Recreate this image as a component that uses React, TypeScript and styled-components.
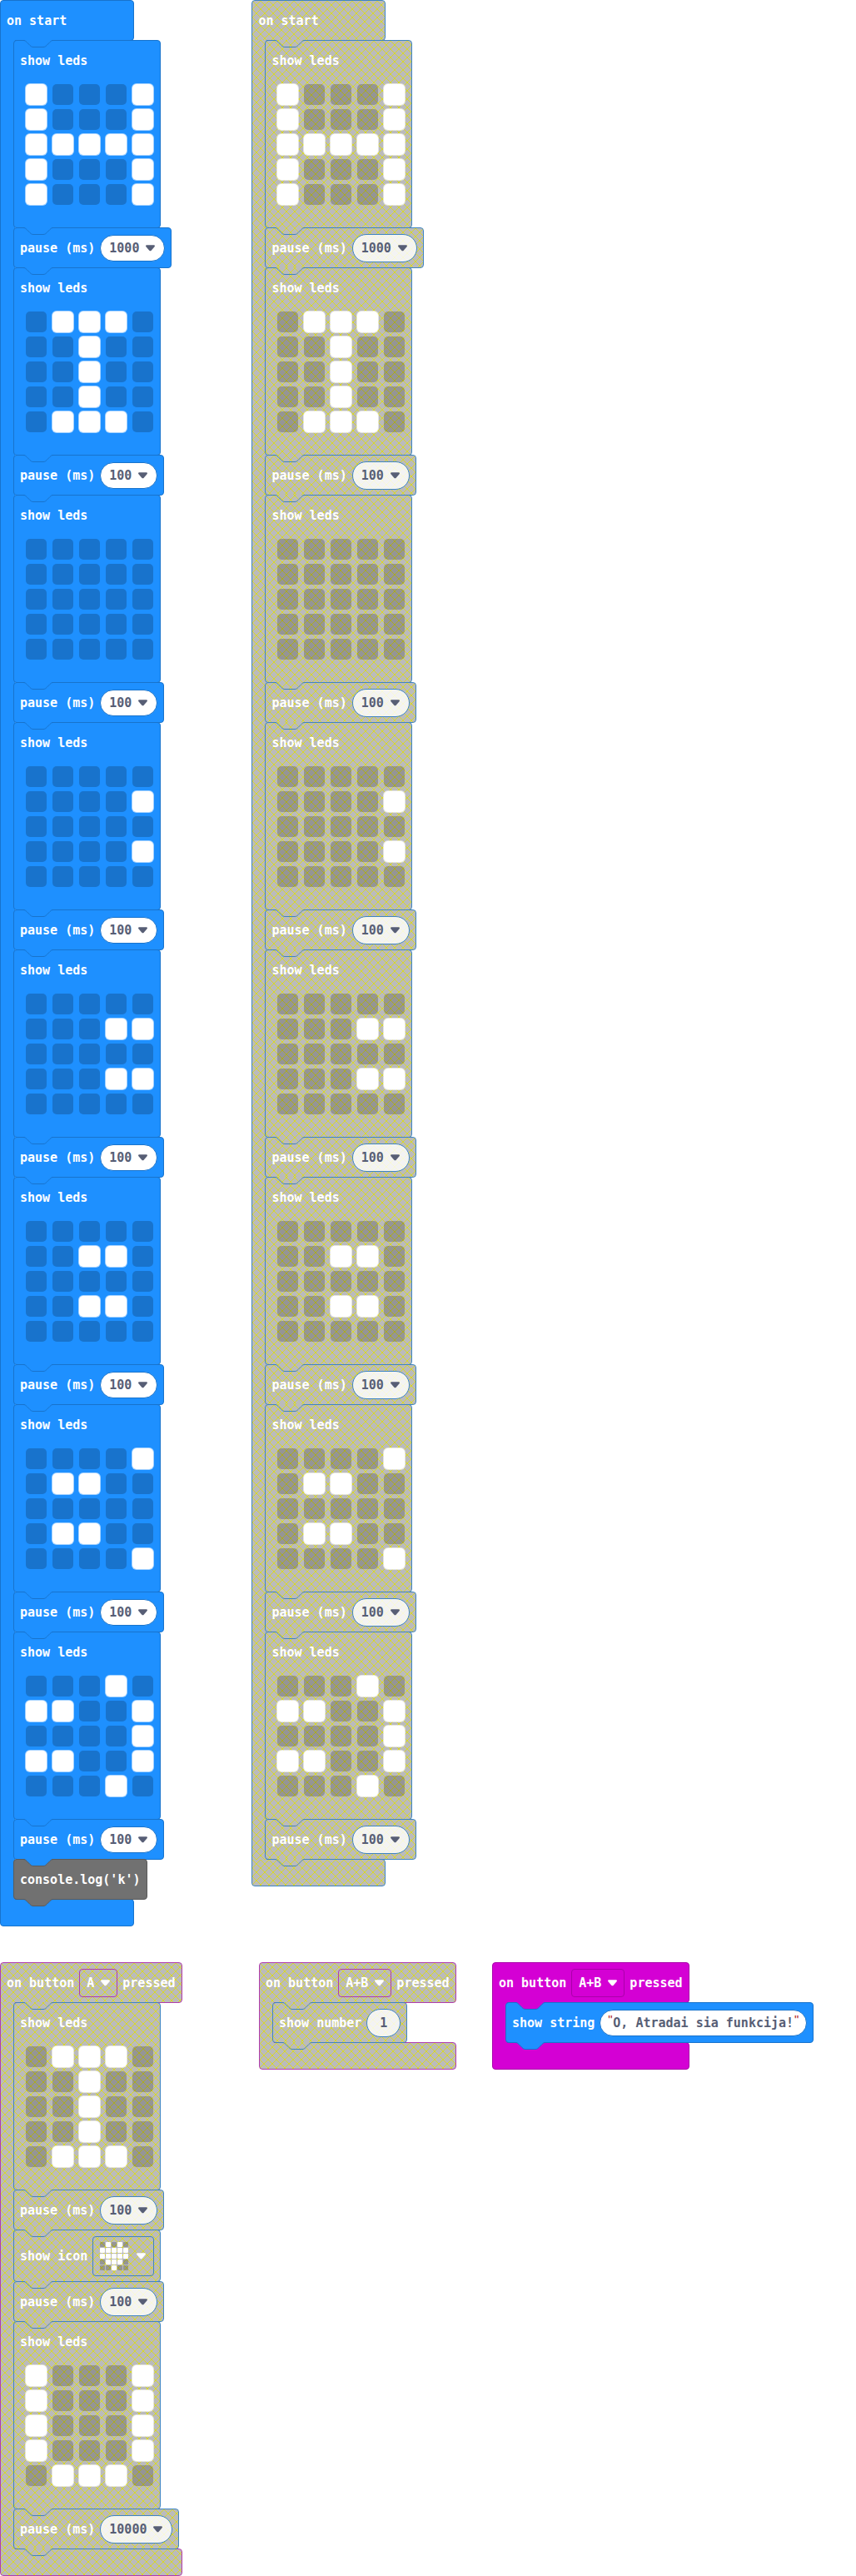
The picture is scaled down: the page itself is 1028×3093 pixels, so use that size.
import React from "react";
import styled, { createGlobalStyle, css } from "styled-components";

const hatchTile = encodeURIComponent(
  "<svg xmlns='http://www.w3.org/2000/svg' width='10' height='10'><rect width='10' height='10' fill='#bbb'/><path d='M-1 -1L11 11M11 -1L-1 11' stroke='#d8d826' fill='none'/></svg>"
);

type Tone = "basic" | "input" | "grey" | "basicOff" | "inputOff";

const tones: Record<Tone, { fill: string; line: string; svgFill: string }> = {
  basic: { fill: "#1e90ff", line: "#1873cc", svgFill: "#1e90ff" },
  input: { fill: "#d400d4", line: "#aa00aa", svgFill: "#d400d4" },
  grey: { fill: "#717171", line: "#5a5a5a", svgFill: "#717171" },
  basicOff: {
    fill: `url("data:image/svg+xml,${hatchTile}")`,
    line: "#3f85c2",
    svgFill: "url(#hatch)",
  },
  inputOff: {
    fill: `url("data:image/svg+xml,${hatchTile}")`,
    line: "#b03cae",
    svgFill: "url(#hatch)",
  },
};

const isOff = (tone: Tone) => tone === "basicOff" || tone === "inputOff";

const GlobalStyle = createGlobalStyle`
  * { box-sizing: border-box; }
  body {
    margin: 0;
    background: #fff;
    color: #fff;
    font: bold 15px/20px "DejaVu Sans Mono", monospace;
  }
  input, select, button { font: inherit; color: inherit; margin: 0; }
`;

const Workspace = styled.main`
  display: flex;
  flex-direction: column;
  gap: 43px;
`;

const Group = styled.div<{ $gap: number }>`
  display: flex;
  align-items: flex-start;
  gap: ${(p) => p.$gap}px;
`;

interface ToneProps {
  $tone: Tone;
}

const surface = css<ToneProps>`
  background: ${(p) => tones[p.$tone].fill};
  border: 1px solid ${(p) => tones[p.$tone].line};
`;

const Hat = styled.section`
  display: flex;
  flex-direction: column;
  align-items: stretch;
  width: fit-content;
`;

const Cap = styled.header<ToneProps>`
  ${surface}
  display: flex;
  align-items: center;
  gap: 6px;
  align-self: flex-start;
  min-width: 161px;
  height: 49px;
  padding: 0 7px;
  border-radius: 4px 4px 4px 0;
`;

const Body = styled.div`
  position: relative;
  z-index: 1;
  display: flex;
  margin: -1px 0;
`;

const Spine = styled.div<ToneProps>`
  flex: none;
  width: 18px;
  margin-right: -2px;
  background: ${(p) => tones[p.$tone].fill};
  border-left: 1px solid ${(p) => tones[p.$tone].line};
`;

const Foot = styled.div<ToneProps & { $width: number }>`
  ${surface}
  width: ${(p) => p.$width}px;
  height: 33px;
  border-radius: 0 4px 4px 4px;
`;

const Statements = styled.div`
  position: relative;
  display: flex;
  flex-direction: column;
  align-items: flex-start;
`;

const Statement = styled.div<ToneProps>`
  ${surface}
  position: relative;
  border-radius: 4px;
  & + & {
    margin-top: -1px;
  }
`;

const Line = styled.div<{ $tall?: boolean }>`
  display: flex;
  align-items: center;
  gap: 6px;
  height: ${(p) => (p.$tall ? 61 : 47)}px;
  padding: 0 7px;
  white-space: nowrap;
`;

const TabShape = styled.svg<{ $top?: boolean }>`
  position: absolute;
  z-index: 2;
  left: ${(p) => (p.$top ? 12 : 11)}px;
  ${(p) => (p.$top ? "top: 0;" : "bottom: -10px;")}
  display: block;
  pointer-events: none;
`;

function Tab({ tone, line, top }: { tone: Tone; line: Tone; top?: boolean }) {
  const curve =
    "c2 0 3 1 4 2l4 4c1 1 2 2 4 2h12c2 0 3 -1 4 -2l4 -4c1 -1 2 -2 4 -2";
  return (
    <TabShape width="36" height="10" viewBox="0 0 36 10" $top={top} aria-hidden>
      <path d={`M2 0v.5h-2${curve}h-2v-.5z`} fill={tones[tone].svgFill} />
      <path d={`M0 .5${curve}`} fill="none" stroke={tones[line].line} />
    </TabShape>
  );
}

const CaretShape = styled.svg<{ $inset: number }>`
  position: absolute;
  right: ${(p) => p.$inset}px;
  top: 50%;
  margin-top: -4px;
  pointer-events: none;
`;

const Caret = ({ color, inset }: { color: string; inset: number }) => (
  <CaretShape width="11" height="8" viewBox="0 0 11 8" $inset={inset} aria-hidden>
    <path
      d="M1.4 .3h8.2c1.2 0 1.7 1.1 1 2L6.7 6.8c-.7.7-1.7.7-2.4 0L.4 2.3C-.3 1.4.2.3 1.4.3z"
      fill={color}
    />
  </CaretShape>
);

const Picker = styled.span`
  position: relative;
  display: flex;
  flex: none;
`;

const pill = css<ToneProps>`
  height: ${(p) => (isOff(p.$tone) ? 34 : 32)}px;
  border-radius: 17px;
  border: 1px solid ${(p) => tones[p.$tone].line};
  background: ${(p) =>
    isOff(p.$tone) ? "rgba(255, 255, 255, 0.82)" : "#fff"};
  color: #575e75;
`;

const PillSelect = styled.select<ToneProps & { $chars: number }>`
  ${pill}
  appearance: none;
  width: calc(${(p) => p.$chars}ch + 42px);
  padding: 0 0 0 10px;
`;

const BoxSelect = styled.select<ToneProps & { $chars: number }>`
  appearance: none;
  width: calc(${(p) => p.$chars}ch + 37px);
  height: 34px;
  padding: 0 0 0 8px;
  border: 1px solid ${(p) => tones[p.$tone].line};
  border-radius: 4px;
  background: transparent;
  option {
    color: #575e75;
  }
`;

const NumberBox = styled.input<ToneProps>`
  ${pill}
  width: 41px;
  padding: 0;
  text-align: center;
`;

const TextPill = styled.span<ToneProps>`
  ${pill}
  display: flex;
  align-items: center;
  justify-content: space-between;
  padding: 0 8px;
`;

const Quote = styled.span`
  width: 7px;
  margin-top: -8px;
  color: #b3261e;
  font-weight: normal;
  font-family: "Liberation Sans", sans-serif;
  text-align: center;
`;

const TextInput = styled.input<{ $chars: number }>`
  width: ${(p) => p.$chars}ch;
  padding: 0;
  border: 0;
  background: none;
`;

const Leds = styled.div`
  display: grid;
  grid-template-columns: repeat(5, 25px);
  grid-auto-rows: 25px;
  gap: 5px 7px;
  padding: 5px 8px 27px 14px;
`;

const Led = styled.input`
  appearance: none;
  width: 25px;
  height: 25px;
  border-radius: 5px;
  background: rgba(0, 0, 0, 0.2);
  &:checked {
    background: #fff;
    box-shadow: 0 0 0 1px rgba(255, 255, 255, 0.6);
  }
`;

const IconButton = styled.button<ToneProps>`
  position: relative;
  width: 74px;
  height: 48px;
  padding: 0 0 0 8px;
  border: 1px solid ${(p) => tones[p.$tone].line};
  border-radius: 4px;
  background: transparent;
`;

const IconGrid = styled.span`
  display: grid;
  grid-template-columns: repeat(5, 6px);
  grid-auto-rows: 6px;
  gap: 1px;
`;

const IconCell = styled.span<{ $on: boolean }>`
  border-radius: 1px;
  background: ${(p) => (p.$on ? "#fff" : "rgba(0, 0, 0, 0.2)")};
`;

type Step =
  | { kind: "leds"; rows: string }
  | { kind: "pause"; ms: string }
  | { kind: "icon"; rows: string }
  | { kind: "number"; value: string }
  | { kind: "string"; value: string }
  | { kind: "raw"; code: string };

function StepContent({ step, tone }: { step: Step; tone: Tone }) {
  switch (step.kind) {
    case "leds":
      return (
        <>
          <Line>show leds</Line>
          <Leds>
            {[...step.rows.replace(/ /g, "")].map((c, i) => (
              <Led
                key={i}
                type="checkbox"
                defaultChecked={c === "#"}
                aria-label={`LED ${(i % 5) + 1}, ${Math.floor(i / 5) + 1}`}
              />
            ))}
          </Leds>
        </>
      );
    case "pause":
      return (
        <Line as="label">
          <span>pause (ms)</span>
          <Picker>
            <PillSelect
              $tone={tone}
              $chars={step.ms.length}
              defaultValue={step.ms}
            >
              <option>{step.ms}</option>
            </PillSelect>
            <Caret color="#575e75" inset={12} />
          </Picker>
        </Line>
      );
    case "icon":
      return (
        <Line $tall>
          <span>show icon</span>
          <IconButton type="button" $tone={tone} aria-label="heart">
            <IconGrid>
              {[...step.rows.replace(/ /g, "")].map((c, i) => (
                <IconCell key={i} $on={c === "#"} />
              ))}
            </IconGrid>
            <Caret color="#fff" inset={9} />
          </IconButton>
        </Line>
      );
    case "number":
      return (
        <Line as="label">
          <span>show number</span>
          <NumberBox $tone={tone} defaultValue={step.value} />
        </Line>
      );
    case "string":
      return (
        <Line as="label">
          <span>show string</span>
          <TextPill $tone={tone}>
            <Quote>"</Quote>
            <TextInput $chars={step.value.length} defaultValue={step.value} />
            <Quote>"</Quote>
          </TextPill>
        </Line>
      );
    case "raw":
      return <Line>{step.code}</Line>;
  }
}

interface HatBlockProps {
  tone: Tone;
  inner: Tone;
  button?: string;
  footWidth: number;
  steps: Step[];
}

function HatBlock({ tone, inner, button, footWidth, steps }: HatBlockProps) {
  const toneOf = (s: Step): Tone => (s.kind === "raw" ? "grey" : inner);
  return (
    <Hat>
      {button ? (
        <Cap $tone={tone}>
          <span>on button</span>
          <Picker>
            <BoxSelect
              $tone={tone}
              $chars={button.length}
              defaultValue={button}
              aria-label="button"
            >
              <option>{button}</option>
            </BoxSelect>
            <Caret color="#fff" inset={9} />
          </Picker>
          <span>pressed</span>
        </Cap>
      ) : (
        <Cap $tone={tone}>on start</Cap>
      )}
      <Body>
        <Spine $tone={tone} />
        <Statements>
          {steps.map((step, i) => (
            <Statement key={i} $tone={toneOf(step)}>
              <StepContent step={step} tone={toneOf(step)} />
              <Tab tone={toneOf(step)} line={toneOf(steps[i + 1] ?? step)} />
            </Statement>
          ))}
          <Tab top tone={tone} line={inner} />
        </Statements>
      </Body>
      <Foot $tone={tone} $width={footWidth} />
    </Hat>
  );
}

const leds = (rows: string): Step => ({ kind: "leds", rows });
const pause = (ms: string): Step => ({ kind: "pause", ms });

const animation: Step[] = [
  leds("#...# #...# ##### #...# #...#"),
  pause("1000"),
  leds(".###. ..#.. ..#.. ..#.. .###."),
  pause("100"),
  leds("..... ..... ..... ..... ....."),
  pause("100"),
  leds("..... ....# ..... ....# ....."),
  pause("100"),
  leds("..... ...## ..... ...## ....."),
  pause("100"),
  leds("..... ..##. ..... ..##. ....."),
  pause("100"),
  leds("....# .##.. ..... .##.. ....#"),
  pause("100"),
  leds("...#. ##..# ....# ##..# ...#."),
  pause("100"),
];

const buttonA: Step[] = [
  leds(".###. ..#.. ..#.. ..#.. .###."),
  pause("100"),
  { kind: "icon", rows: ".#.#. ##### ##### .###. ..#.." },
  pause("100"),
  leds("#...# #...# #...# #...# .###."),
  pause("10000"),
];

const HiddenDefs = styled.svg`
  position: absolute;
`;

const HatchDefs = () => (
  <HiddenDefs width="0" height="0" aria-hidden>
    <pattern id="hatch" width="10" height="10" x="-1" y="-4" patternUnits="userSpaceOnUse">
      <rect width="10" height="10" fill="#bbb" />
      <path d="M-1 -1L11 11M11 -1L-1 11" stroke="#d8d826" fill="none" />
    </pattern>
  </HiddenDefs>
);

export default function App() {
  return (
    <>
      <GlobalStyle />
      <HatchDefs />
      <Workspace>
        <Group $gap={96}>
          <HatBlock
            tone="basic"
            inner="basic"
            footWidth={161}
            steps={[...animation, { kind: "raw", code: "console.log('k')" }]}
          />
          <HatBlock
            tone="basicOff"
            inner="basicOff"
            footWidth={161}
            steps={animation}
          />
        </Group>
        <Group $gap={92}>
          <HatBlock
            tone="inputOff"
            inner="basicOff"
            button="A"
            footWidth={219}
            steps={buttonA}
          />
          <Group $gap={43}>
            <HatBlock
              tone="inputOff"
              inner="basicOff"
              button="A+B"
              footWidth={237}
              steps={[{ kind: "number", value: "1" }]}
            />
            <HatBlock
              tone="input"
              inner="basic"
              button="A+B"
              footWidth={237}
              steps={[{ kind: "string", value: "O, Atradai sia funkcija!" }]}
            />
          </Group>
        </Group>
      </Workspace>
    </>
  );
}
